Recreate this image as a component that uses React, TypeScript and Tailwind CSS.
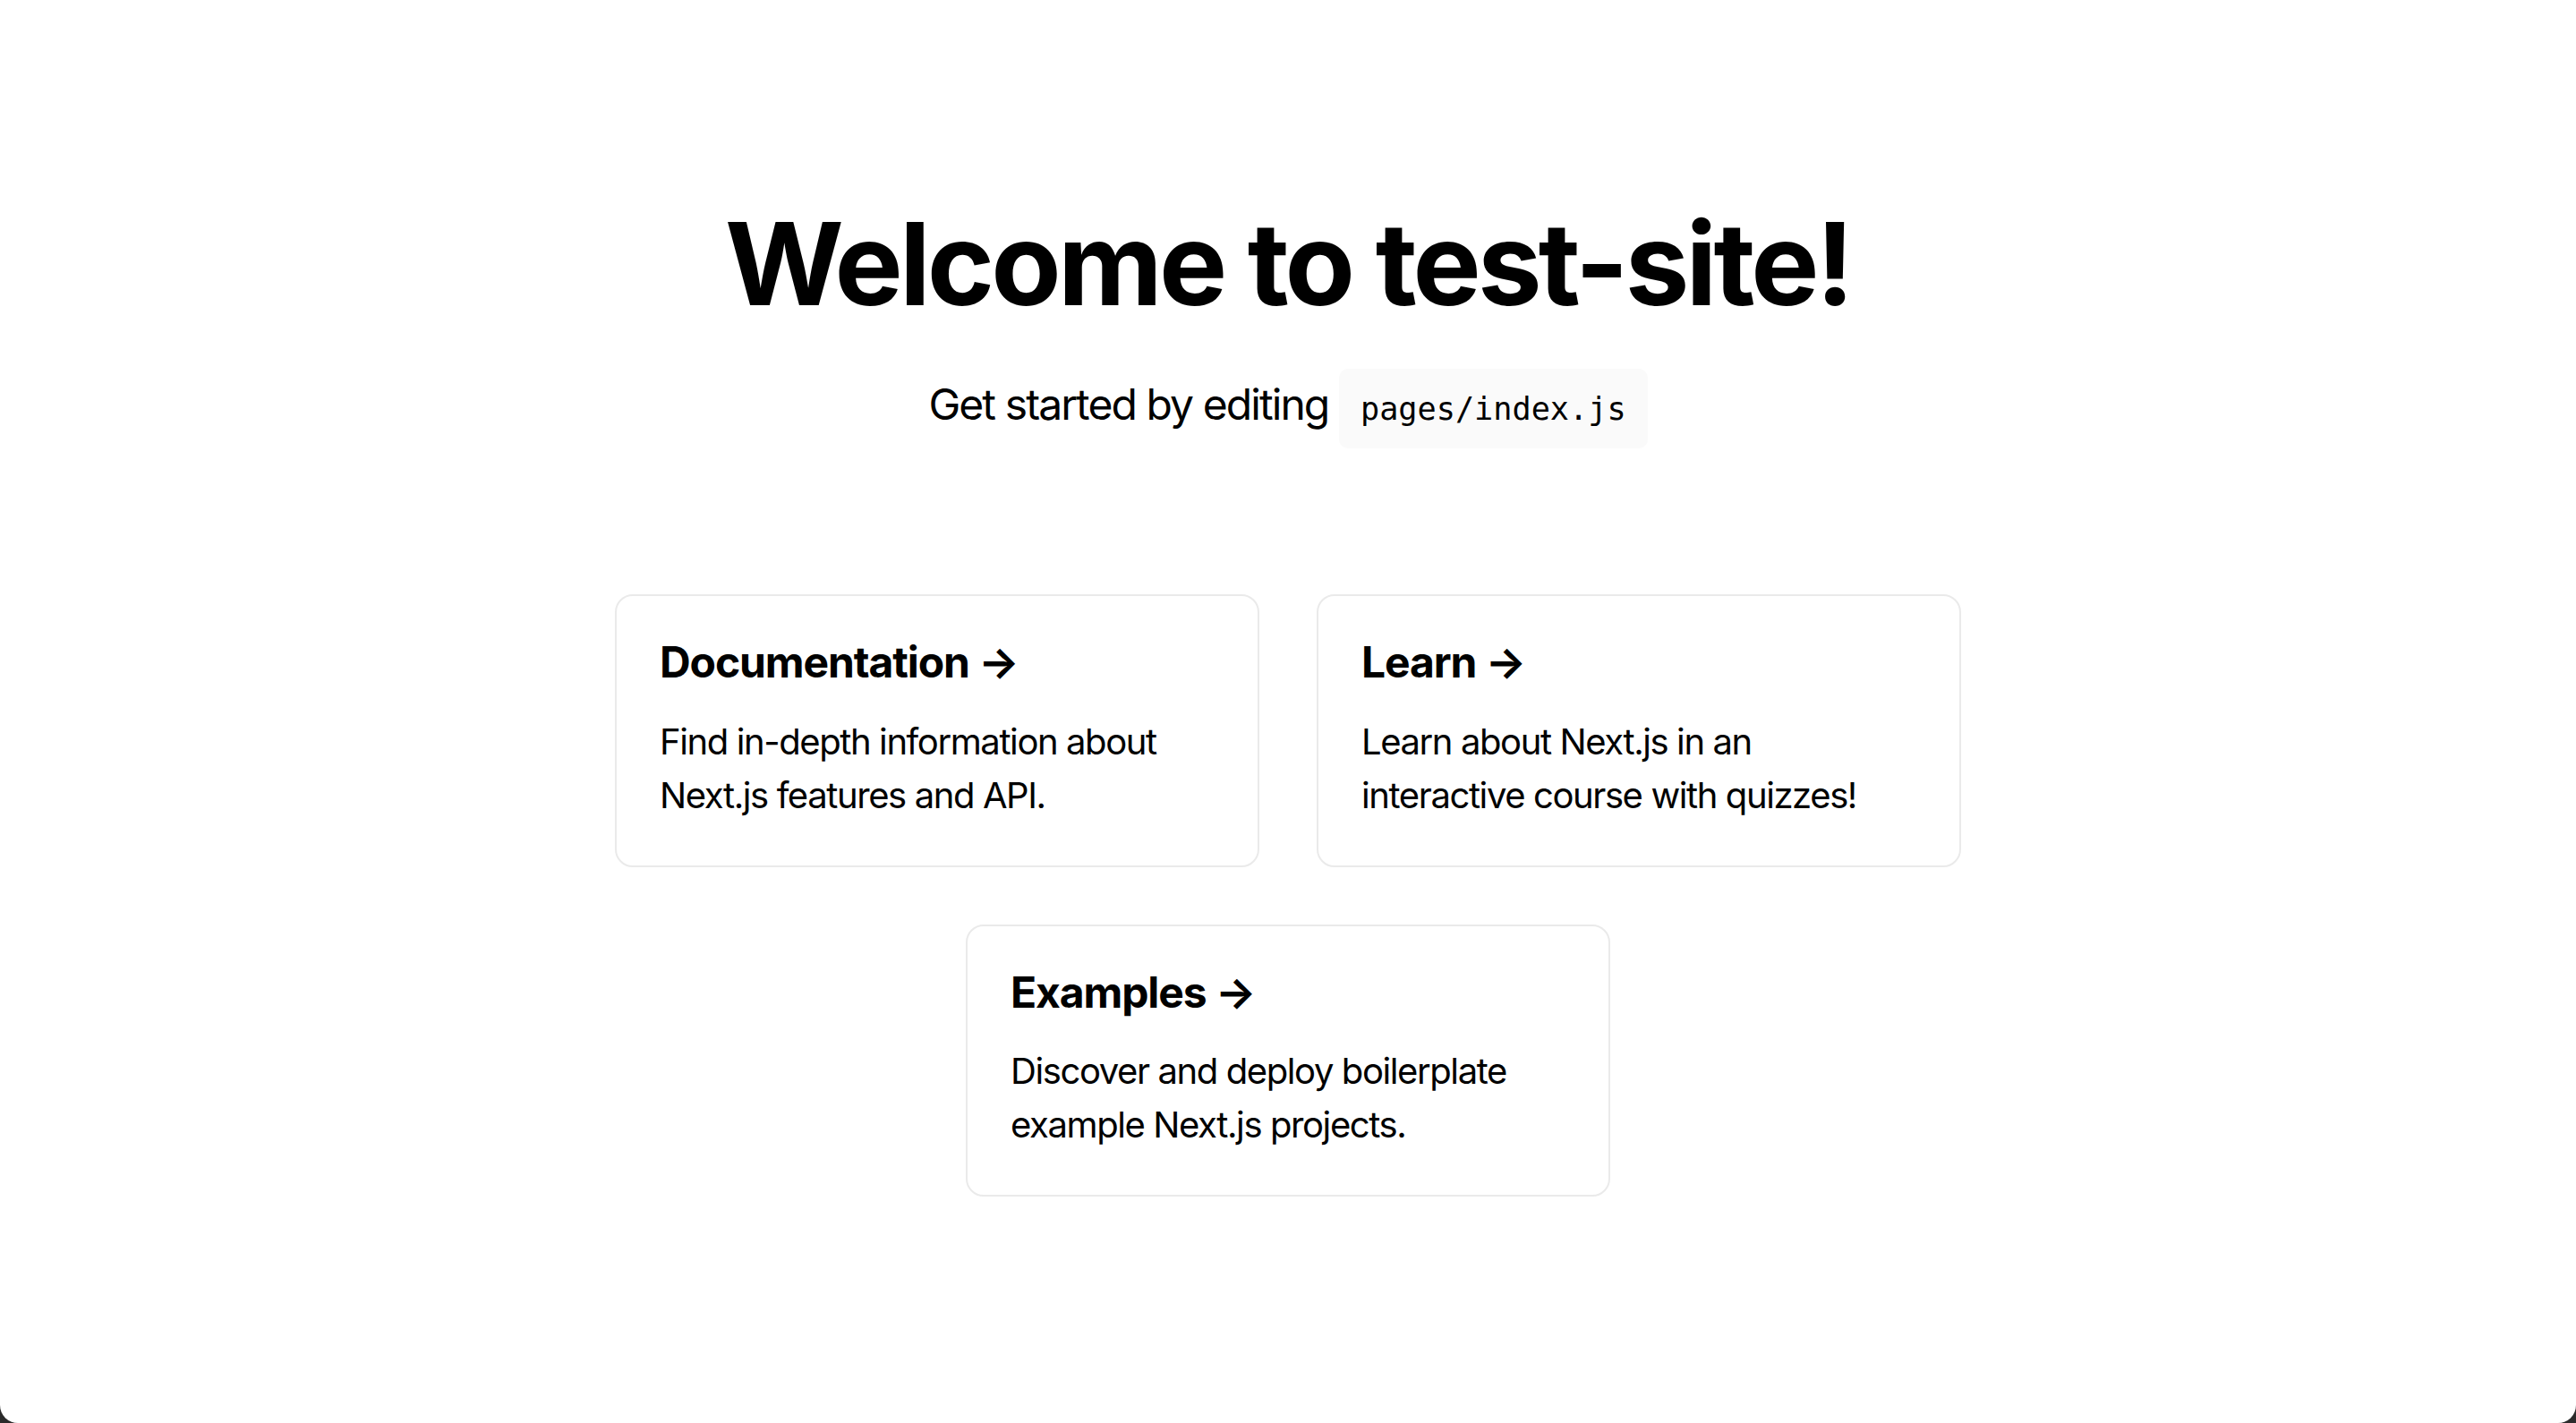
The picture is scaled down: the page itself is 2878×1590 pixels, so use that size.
const cards = [
  { title: "Documentation", text: "Find in-depth information about Next.js features and API." },
  { title: "Learn", text: "Learn about Next.js in an interactive course with quizzes!" },
  { title: "Examples", text: "Discover and deploy boilerplate example Next.js projects." },
];

export default function App() {
  return (
    <div className="h-[1590px] bg-[#2b2b2b] font-['Inter','Noto_Sans',sans-serif] text-black">
      <div className="h-full bg-white rounded-b-[20px] flex flex-col justify-center items-center px-4">
        <main className="py-[160px] flex-1 flex flex-col justify-center items-center">
          <h1 className="m-0 text-center text-[128px] leading-[1.15] font-bold tracking-[-0.03em]">
            Welcome to test-site!
          </h1>

          <p className="my-[48px] text-center text-[48px] leading-[1.5] tracking-[-0.04em]">
            Get started by editing{" "}
            <code className="bg-[#fafafa] rounded-[10px] p-[24px] text-[35.2px] tracking-normal font-['DejaVu_Sans_Mono',monospace]">
              pages/index.js
            </code>
          </p>

          <div className="mt-[96px] w-full max-w-[1600px] flex flex-wrap items-center justify-center">
            {cards.map((c) => (
              <a
                key={c.title}
                href="#"
                className="m-[32px] p-[48px] w-[720px] border-2 border-[#eaeaea] rounded-[20px] text-left"
              >
                <h2 className="mb-[32px] text-[48px] leading-[1.1] font-bold tracking-[-0.023em]">
                  {c.title} &rarr;
                </h2>
                <p className="text-[40px] leading-[1.5] tracking-[-0.035em]">{c.text}</p>
              </a>
            ))}
          </div>
        </main>
      </div>
    </div>
  );
}
